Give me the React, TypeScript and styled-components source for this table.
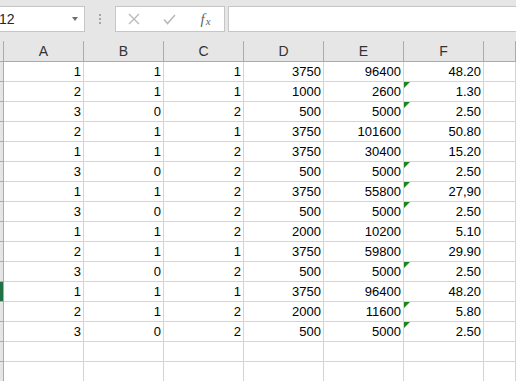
import styled, { createGlobalStyle } from 'styled-components';

const GlobalStyle = createGlobalStyle`
	html, body {
		margin: 0;
		padding: 0;
		background: #ffffff;
		overflow: hidden;
	}
`;

const Window = styled.div`
	width: 516px;
	height: 381px;
	overflow: hidden;
	background: #ffffff;
	font-family: "Liberation Sans", Arial, sans-serif;
`;

const FormulaBar = styled.div`
	display: flex;
	align-items: flex-start;
	height: 38px;
	padding-top: 6px;
	box-sizing: border-box;
	background: #e6e6e6;
`;

const NameBox = styled.div`
	width: 85px;
	height: 26px;
	box-sizing: border-box;
	border: 1px solid #c6c6c6;
	border-left: none;
	background: #ffffff;
	display: flex;
	align-items: center;
	justify-content: space-between;
	padding-right: 6px;
	font-size: 14px;
	color: #262626;
`;

const NameText = styled.span`
	margin-left: -1px;
`;

const DropArrow = styled.span`
	width: 0;
	height: 0;
	border-left: 3.5px solid transparent;
	border-right: 3.5px solid transparent;
	border-top: 4px solid #6f6f6f;
`;

const Grip = styled.div`
	display: flex;
	flex-direction: column;
	gap: 2px;
	margin: 8px 14px 0 14px;
`;

const GripDot = styled.span`
	width: 2px;
	height: 2px;
	background: #a6a6a6;
`;

const FxBox = styled.div`
	width: 110px;
	height: 26px;
	box-sizing: border-box;
	border: 1px solid #c6c6c6;
	background: #ffffff;
	display: grid;
	grid-template-columns: 36px 35px 37px;
	align-items: center;
	justify-items: center;
`;

const FxLabel = styled.span`
	font-family: "Liberation Serif", "Times New Roman", serif;
	font-style: italic;
	font-size: 15px;
	color: #666666;
`;

const FxSub = styled.span`
	font-size: 11px;
	margin-left: 1px;
	position: relative;
	top: 1px;
`;

const FormulaInput = styled.div`
	flex: 1;
	height: 26px;
	margin-left: 3px;
	box-sizing: border-box;
	border: 1px solid #c6c6c6;
	border-right: none;
	background: #ffffff;
`;

const Row = styled.div<{ header?: boolean }>`
	display: grid;
	grid-template-columns: 4px repeat(6, 80px) 1fr;
	${props => props.header && `
		background: #e6e6e6;
		padding-top: 3px;
		border-bottom: 1px solid #ababab;
	`}
`;

const Corner = styled.div`
	height: 20px;
	box-sizing: border-box;
	border-right: 1px solid #ababab;
`;

const ColHeader = styled.div`
	height: 20px;
	box-sizing: border-box;
	border-right: 1px solid #ababab;
	display: flex;
	align-items: center;
	justify-content: center;
	font-size: 14px;
	color: #333333;
`;

const RowHeader = styled.div<{ active?: boolean }>`
	height: 20px;
	box-sizing: border-box;
	background: ${props => (props.active ? '#217346' : '#e6e6e6')};
	border-right: 1px solid #ababab;
	border-bottom: 1px solid #ababab;
`;

const Cell = styled.div<{ flag?: boolean }>`
	position: relative;
	height: 20px;
	box-sizing: border-box;
	border-right: 1px solid #d4d4d4;
	border-bottom: 1px solid #d4d4d4;
	padding-right: 2px;
	text-align: right;
	font-size: 13px;
	line-height: 20px;
	color: #000000;
	${props => props.flag && `
		&::before {
			content: '';
			position: absolute;
			top: 0;
			left: 0;
			border-top: 6px solid #1b861b;
			border-right: 6px solid transparent;
		}
	`}
`;

const columns = ['A', 'B', 'C', 'D', 'E', 'F'];

const data: { values: string[]; flag?: boolean }[] = [
	{ values: ['1', '1', '1', '3750', '96400', '48.20'] },
	{ values: ['2', '1', '1', '1000', '2600', '1.30'], flag: true },
	{ values: ['3', '0', '2', '500', '5000', '2.50'], flag: true },
	{ values: ['2', '1', '1', '3750', '101600', '50.80'] },
	{ values: ['1', '1', '2', '3750', '30400', '15.20'] },
	{ values: ['3', '0', '2', '500', '5000', '2.50'], flag: true },
	{ values: ['1', '1', '2', '3750', '55800', '27,90'], flag: true },
	{ values: ['3', '0', '2', '500', '5000', '2.50'], flag: true },
	{ values: ['1', '1', '2', '2000', '10200', '5.10'] },
	{ values: ['2', '1', '1', '3750', '59800', '29.90'] },
	{ values: ['3', '0', '2', '500', '5000', '2.50'], flag: true },
	{ values: ['1', '1', '1', '3750', '96400', '48.20'] },
	{ values: ['2', '1', '2', '2000', '11600', '5.80'], flag: true },
	{ values: ['3', '0', '2', '500', '5000', '2.50'], flag: true },
	{ values: ['', '', '', '', '', ''] },
	{ values: ['', '', '', '', '', ''] },
];

const ACTIVE_ROW = 11;

const App = () => {
	return (
		<Window>
			<GlobalStyle />
			<FormulaBar>
				<NameBox>
					<NameText>12</NameText>
					<DropArrow />
				</NameBox>
				<Grip>
					<GripDot />
					<GripDot />
					<GripDot />
				</Grip>
				<FxBox>
					<svg width="12" height="12" viewBox="0 0 12 12">
						<path d="M1 1 L11 11 M11 1 L1 11" stroke="#b8b8b8" strokeWidth="1.3" fill="none" />
					</svg>
					<svg width="13" height="11" viewBox="0 0 13 11">
						<path d="M1 5.5 L4.5 9.5 L12 1" stroke="#b8b8b8" strokeWidth="1.5" fill="none" />
					</svg>
					<FxLabel>f<FxSub>x</FxSub></FxLabel>
				</FxBox>
				<FormulaInput />
			</FormulaBar>
			<Row header>
				<Corner />
				{columns.map(col => (
					<ColHeader key={col}>{col}</ColHeader>
				))}
				<ColHeader />
			</Row>
			{data.map((row, index) => (
				<Row key={index}>
					<RowHeader active={index === ACTIVE_ROW} />
					{row.values.map((value, i) => (
						<Cell key={i} flag={i === 5 && row.flag}>
							{value}
						</Cell>
					))}
					<Cell />
				</Row>
			))}
		</Window>
	);
};

export default App;
